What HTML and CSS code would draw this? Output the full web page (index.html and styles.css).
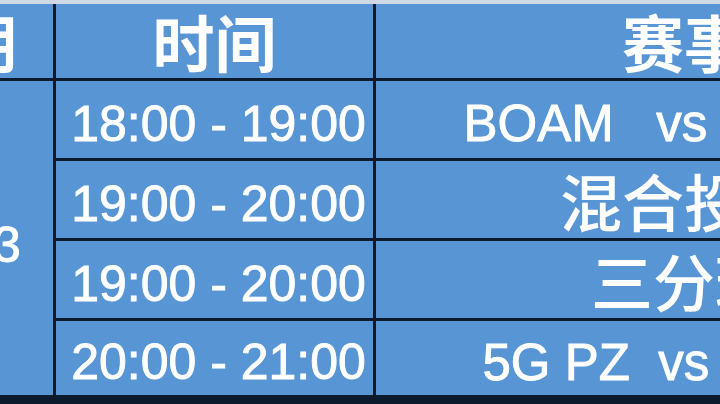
FILE: index.html
```html
<!DOCTYPE html>
<html lang="zh-CN">
<head>
<meta charset="utf-8">
<title>赛程表</title>
<link rel="stylesheet" href="styles.css">
</head>
<body>
<div class="page">
  <div class="strip"></div>
  <div class="sheet">
    <div class="cell head">日期</div>
    <div class="cell head">时间</div>
    <div class="cell head">赛事名称</div>
    <div class="cell date">11/23</div>
    <div class="cell time">18:00 - 19:00</div>
    <div class="cell event latin">BOAM   vs   WARRIORS</div>
    <div class="cell time">19:00 - 20:00</div>
    <div class="cell event">混合投篮比赛</div>
    <div class="cell time">19:00 - 20:00</div>
    <div class="cell event">三分球比赛</div>
    <div class="cell time">20:00 - 21:00</div>
    <div class="cell event latin">5G PZ  vs   DRAGONS</div>
  </div>
</div>
</body>
</html>
```

FILE: styles.css
```css
html, body {
  margin: 0;
  padding: 0;
  background: #0b0f1a;
}
.page {
  width: 720px;
  height: 404px;
  overflow: hidden;
  background: #0b0f1a;
}
.strip {
  height: 4px;
  background: #cfd8e3;
}
.sheet {
  display: grid;
  grid-template-columns: 196px 317px 740px;
  grid-template-rows: 74px 77px 77px 77px 74px;
  gap: 3px;
  margin-left: -143px;
  width: 1259px;
  background: #0d1a2e;
  padding-bottom: 9px;
}
.cell {
  background: #5795d5;
  color: #ffffff;
  display: flex;
  align-items: center;
  justify-content: center;
  white-space: pre;
  font-family: "Liberation Sans", "Noto Sans CJK SC", sans-serif;
  font-weight: 400;
  font-size: 50px;
  line-height: 1;
  -webkit-text-stroke: 0.9px #ffffff;
  overflow: hidden;
}
.head {
  font-family: "Noto Sans CJK SC", sans-serif;
  font-weight: 700;
  font-size: 62px;
  -webkit-text-stroke: 0;
}
.date {
  grid-row: 2 / 6;
  padding-top: 14px;
  padding-left: 10px;
}
.time {
  padding-top: 8px;
  padding-left: 8px;
}
.event {
  font-family: "Noto Sans CJK SC", sans-serif;
  font-weight: 500;
  font-size: 62px;
  -webkit-text-stroke: 0;
}
.event.latin {
  font-family: "Liberation Sans", "Noto Sans CJK SC", sans-serif;
  font-weight: 400;
  font-size: 51px;
  padding-top: 8px;
  -webkit-text-stroke: 0.9px #ffffff;
}
```
